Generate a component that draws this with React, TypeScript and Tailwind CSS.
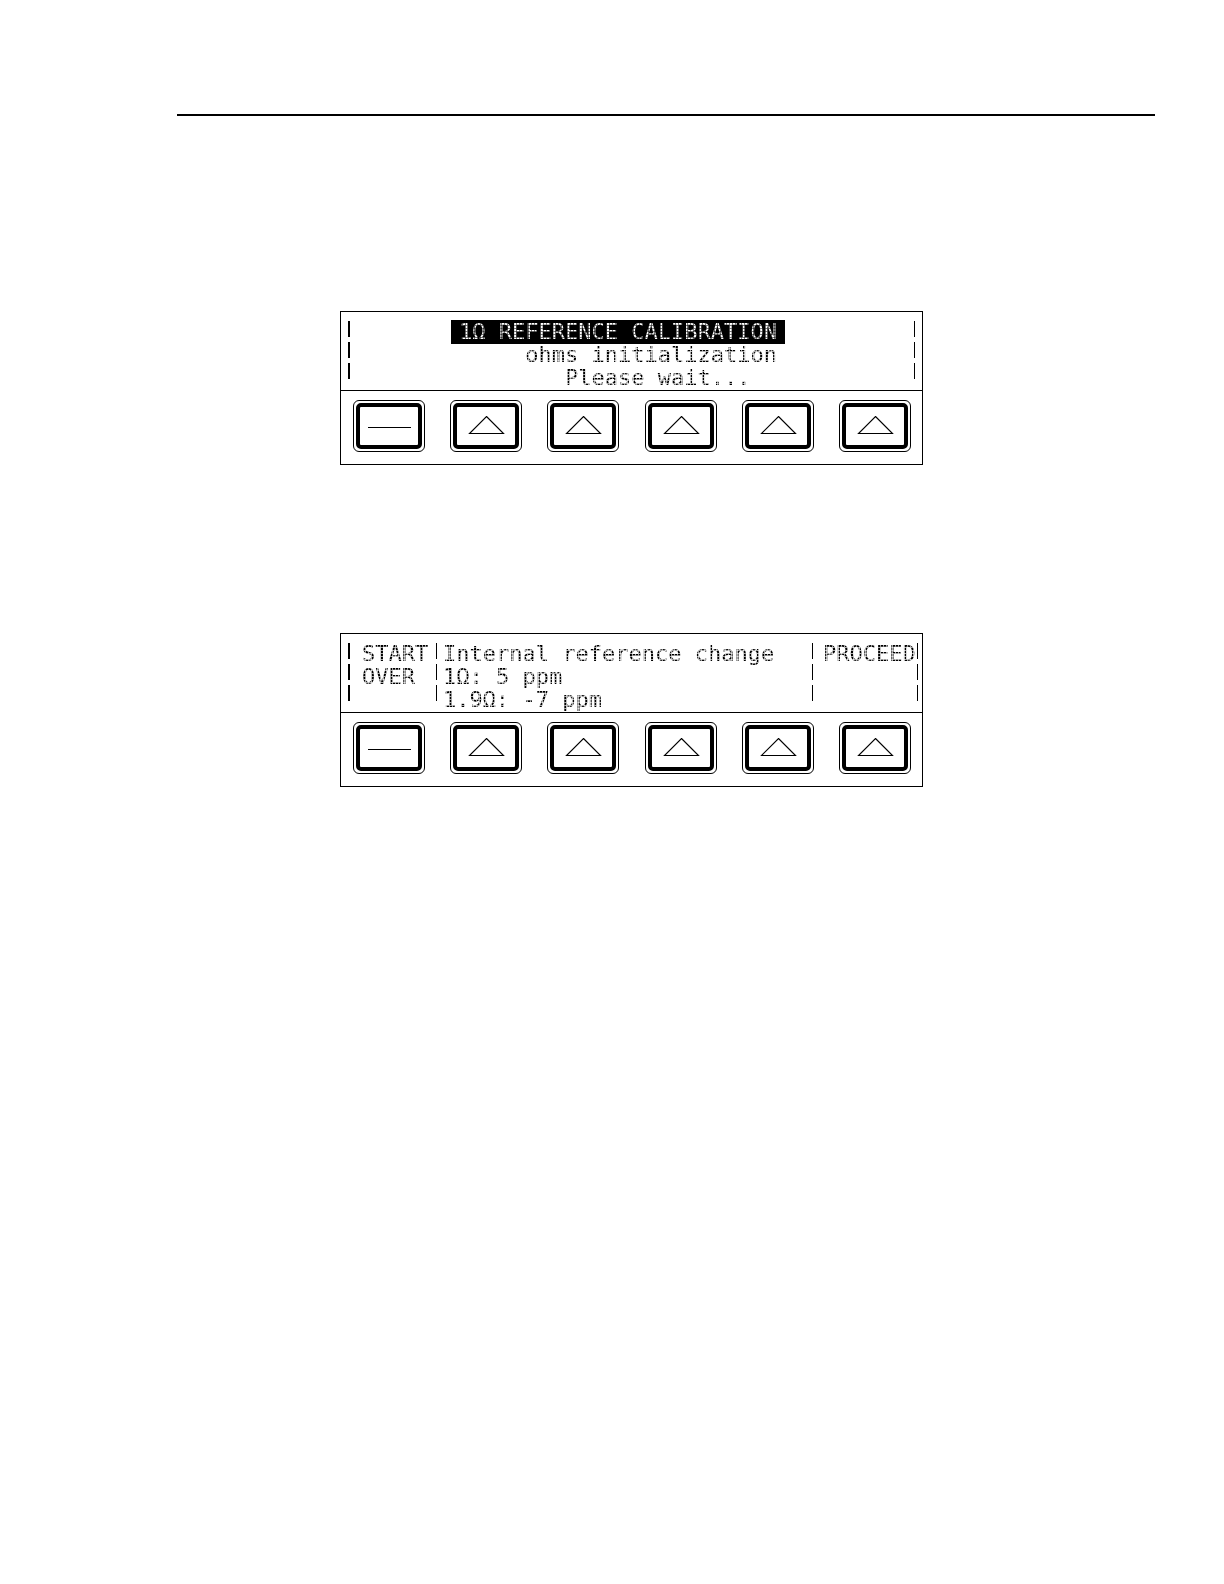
import type { ReactNode } from "react";
import clsx from "clsx";

const KEYS = ["Previous menu", "Softkey 1", "Softkey 2", "Softkey 3", "Softkey 4", "Softkey 5"];

function Dashes({ thick = false }: { thick?: boolean }) {
  return (
    <div className="flex shrink-0 flex-col gap-[5px] pt-px" aria-hidden="true">
      {[0, 1, 2].map((i) => (
        <span key={i} className={clsx("h-4 bg-black", thick ? "w-0.5" : "w-px")} />
      ))}
    </div>
  );
}

// Dot-matrix look: the glyphs are filled with a fine grid
function Dots({ children, inverse = false }: { children: ReactNode; inverse?: boolean }) {
  return (
    <span
      className={clsx(
        "bg-clip-text bg-[size:3px_3px] text-transparent",
        inverse
          ? "bg-[linear-gradient(to_right,#0008_1px,transparent_1px),linear-gradient(to_bottom,#0008_1px,transparent_1px),linear-gradient(#fff,#fff)]"
          : "bg-[linear-gradient(to_right,#fffa_1px,transparent_1px),linear-gradient(to_bottom,#fffa_1px,transparent_1px),linear-gradient(#000,#000)]"
      )}
    >
      {children}
    </span>
  );
}

function Softkeys() {
  return (
    <div className="flex justify-between pt-[9px] pr-[11px] pb-3 pl-3">
      {KEYS.map((label, i) => (
        <button
          key={label}
          type="button"
          aria-label={label}
          className="h-[52px] w-[72px] rounded-md border border-black p-0.5"
        >
          <span className="flex h-full items-center justify-center rounded-[5px] border-4 border-black">
            <svg width="44" height="20" viewBox="0 0 44 20" fill="none" stroke="#000" strokeWidth="1.1">
              {i === 0 ? <path d="M1 11.5H44" /> : <path d="M22.5 0.5L39.5 17.5H5.5Z" />}
            </svg>
          </span>
        </button>
      ))}
    </div>
  );
}

function Panel({ children }: { children: ReactNode }) {
  return (
    <section className="w-full max-w-[583px] border border-black">
      <div className="flex h-[79px] border-b border-black pt-2 pl-[7px] font-['DejaVu_Sans_Mono',monospace] text-[22px] leading-[23px] whitespace-pre">
        {children}
      </div>
      <Softkeys />
    </section>
  );
}

export default function App() {
  return (
    <main className="min-h-screen bg-white pt-[114px] pr-[69px] pl-[177px] text-black">
      <hr className="border-t-2 border-black" />
      <div className="flex flex-col gap-[168px] pt-[195px] pl-[163px]">
        <Panel>
          <div className="flex w-full pr-[7px]">
            <Dashes thick />
            <div className="grow pl-[101px]">
              <h2 className="-mb-px h-6 w-fit bg-black px-2">
                <Dots inverse>1Ω REFERENCE CALIBRATION</Dots>
              </h2>
              <p className="px-2">
                <Dots>{"     ohms initialization"}</Dots>
              </p>
              <p className="px-2">
                <Dots>{"        Please wait..."}</Dots>
              </p>
            </div>
            <Dashes />
          </div>
        </Panel>

        <Panel>
          <div className="flex w-full pr-1">
            <Dashes thick />
            <p className="w-[86px] shrink-0 pl-3">
              <Dots>{"START\nOVER"}</Dots>
            </p>
            <Dashes />
            <p className="grow pl-1.5">
              <Dots>{"Internal reference change\n1Ω: 5 ppm\n1.9Ω: -7 ppm"}</Dots>
            </p>
            <Dashes />
            <p className="w-[104px] shrink-0 pl-2.5">
              <Dots>PROCEED</Dots>
            </p>
            <Dashes />
          </div>
        </Panel>
      </div>
    </main>
  );
}
